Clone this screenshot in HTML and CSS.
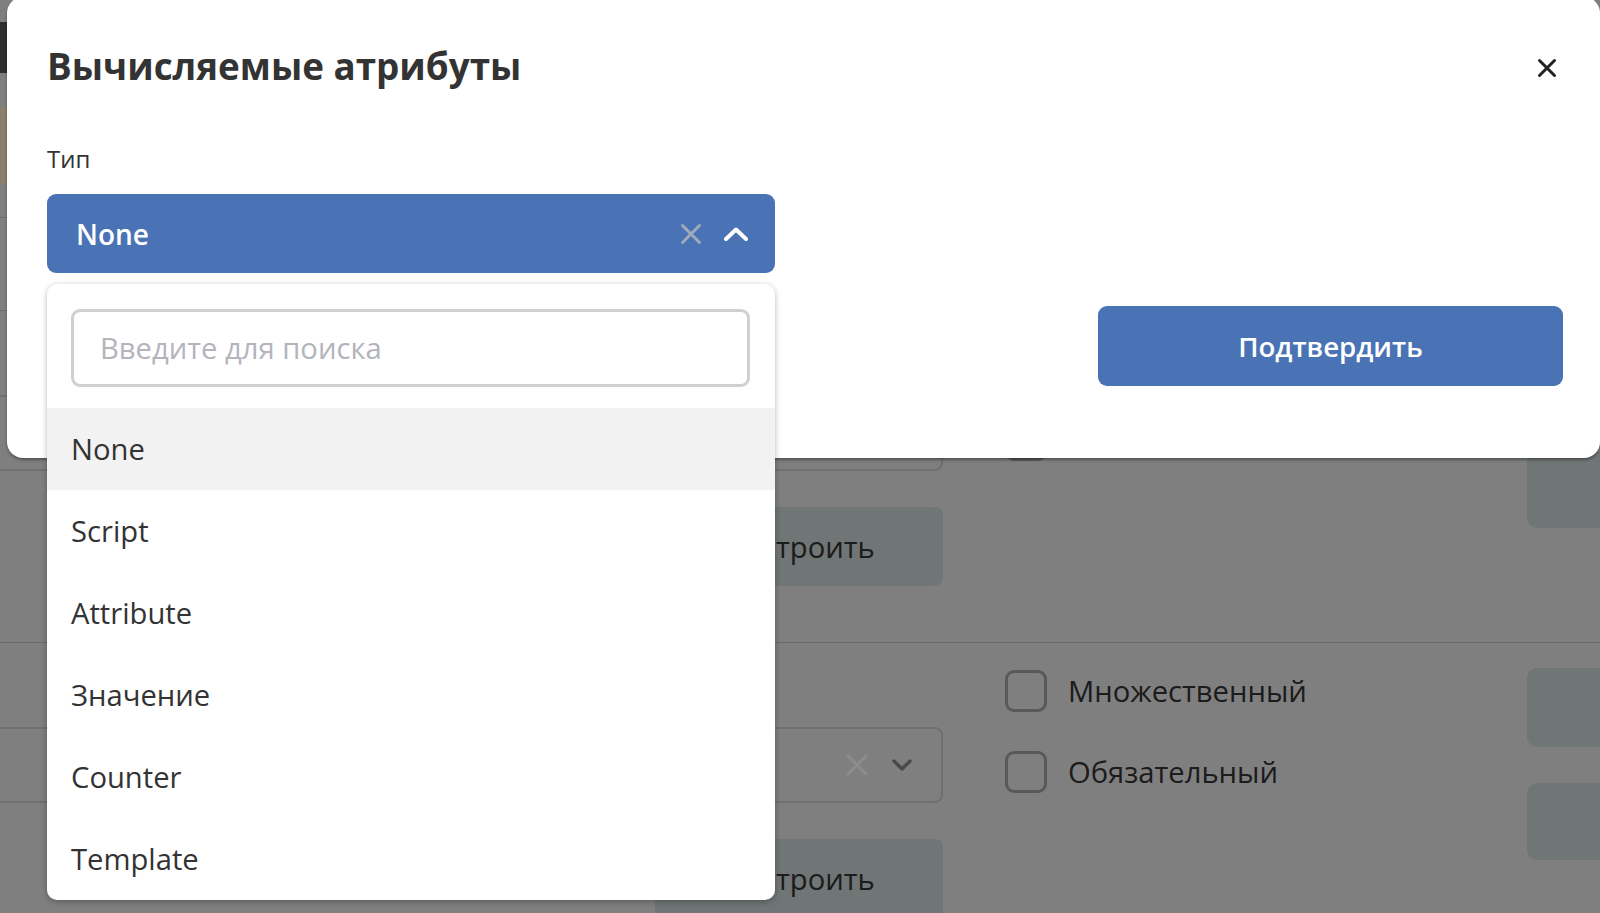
FILE: index.html
```html
<!DOCTYPE html>
<html lang="ru">
<head>
<meta charset="utf-8">
<title>Вычисляемые атрибуты</title>
<link rel="stylesheet" href="styles.css">
</head>
<body>
  <div class="page">
    <div class="page-top">
      <div class="toolbar"></div>
      <div class="preview"></div>
      <div class="top-rule"></div>
    </div>

    <section class="attr-row">
      <div class="attr-main">
        <div class="fake-select">
          <span class="fake-select__icons">
            <svg class="fx" width="24" height="24" viewBox="0 0 24 24"><path d="M3 3L21 21M21 3L3 21" stroke="#ffffff" stroke-width="3" stroke-linecap="round"/></svg>
            <svg class="fchev" width="22" height="14" viewBox="0 0 22 14"><path d="M3 3L11 11L19 3" stroke="#878787" stroke-width="3.5" fill="none" stroke-linecap="round" stroke-linejoin="round"/></svg>
          </span>
        </div>
        <button class="ghost-btn">Построить</button>
      </div>
      <div class="attr-flags">
        <span class="flag"><span class="box"></span></span>
        <span class="flag flag--second"><span class="box"></span></span>
      </div>
      <div class="attr-side">
        <span class="side-btn"></span>
        <span class="side-btn side-btn--second"></span>
      </div>
    </section>

    <section class="attr-row">
      <div class="attr-main">
        <div class="fake-select">
          <span class="fake-select__icons">
            <svg class="fx" width="24" height="24" viewBox="0 0 24 24"><path d="M3 3L21 21M21 3L3 21" stroke="#ffffff" stroke-width="3" stroke-linecap="round"/></svg>
            <svg class="fchev" width="22" height="14" viewBox="0 0 22 14"><path d="M3 3L11 11L19 3" stroke="#878787" stroke-width="3.5" fill="none" stroke-linecap="round" stroke-linejoin="round"/></svg>
          </span>
        </div>
        <button class="ghost-btn">Построить</button>
      </div>
      <div class="attr-flags">
        <label class="flag"><span class="box"></span>Множественный</label>
        <label class="flag flag--second"><span class="box"></span>Обязательный</label>
      </div>
      <div class="attr-side">
        <span class="side-btn"></span>
        <span class="side-btn side-btn--second"></span>
      </div>
    </section>
  </div>

  <div class="backdrop"></div>

  <div class="modal">
    <div class="modal-head">
      <h2 class="modal-title">Вычисляемые атрибуты</h2>
      <button class="modal-close" aria-label="Закрыть">
        <svg width="20" height="20" viewBox="0 0 20 20"><path d="M2.5 2.5L17.5 17.5M17.5 2.5L2.5 17.5" stroke="#222" stroke-width="3" stroke-linecap="round"/></svg>
      </button>
    </div>

    <div class="field">
      <div class="field-label">Тип</div>
      <div class="select-wrap">
        <div class="select">
          <span class="select-value">None</span>
          <span class="select-icons">
            <svg class="select-clear" width="24" height="24" viewBox="0 0 24 24"><path d="M3.5 3.5L20.5 20.5M20.5 3.5L3.5 20.5" stroke="#a1a9bb" stroke-width="3" stroke-linecap="round"/></svg>
            <svg class="select-chev" width="26" height="16" viewBox="0 0 26 16"><path d="M3 13L13 3.5L23 13" stroke="#ffffff" stroke-width="4" fill="none" stroke-linecap="round" stroke-linejoin="round"/></svg>
          </span>
        </div>

        <div class="dropdown">
          <div class="dropdown-search">
            <input class="search-input" type="text" placeholder="Введите для поиска">
          </div>
          <ul class="options">
            <li class="option option--active">None</li>
            <li class="option">Script</li>
            <li class="option">Attribute</li>
            <li class="option">Значение</li>
            <li class="option">Counter</li>
            <li class="option">Template</li>
          </ul>
        </div>
      </div>
    </div>

    <div class="modal-foot">
      <button class="primary-btn">Подтвердить</button>
    </div>
  </div>
</body>
</html>
```

FILE: styles.css
```css
* {
  box-sizing: border-box;
}

html, body {
  margin: 0;
  padding: 0;
}

body {
  width: 1600px;
  height: 913px;
  overflow: hidden;
  position: relative;
  font-family: "Open Sans", "Noto Sans", sans-serif;
  color: #333;
  background: #e8e8e8;
}

button {
  font-family: inherit;
  border: 0;
  padding: 0;
  background: none;
}

/* ---------- page behind the dialog ---------- */

.page {
  width: 1600px;
}

.page-top {
  height: 310px;
  padding-top: 22px;
}

.toolbar {
  height: 51px;
  width: 400px;
  background: #555;
}

.preview {
  margin-top: 34px;
  height: 78px;
  width: 300px;
  background: #fbe9c8;
}

.top-rule {
  margin-top: 32px;
  height: 1px;
  background: #c2c2c2;
}

.attr-row {
  height: 332px;
  border-top: 1px solid #c2c2c2;
  display: flex;
  margin-left: -20px;
}

.attr-main {
  flex: none;
  width: 963px;
  padding-top: 84px;
  display: flex;
  flex-direction: column;
  align-items: flex-end;
}

.fake-select {
  width: 100%;
  height: 76px;
  border: 2px solid #cacaca;
  border-radius: 8px;
  display: flex;
  align-items: center;
  justify-content: flex-end;
  padding-right: 28px;
}

.fake-select__icons {
  display: flex;
  align-items: center;
  gap: 22px;
}

.ghost-btn {
  margin-top: 36px;
  width: 288px;
  height: 79px;
  border-radius: 8px;
  background: #cdd5d5;
  font-size: 29.2px;
  color: #333;
}

.attr-flags {
  flex: none;
  margin-left: 62px;
  width: 522px;
  padding-top: 27px;
  display: flex;
  flex-direction: column;
}

.flag {
  display: flex;
  align-items: center;
  height: 42px;
  font-size: 29.2px;
  color: #333;
}

.flag--second {
  margin-top: 38px;
  height: 43px;
}

.box {
  width: 42px;
  height: 42px;
  border: 3px solid #a2a2a2;
  border-radius: 9px;
  margin-right: 21px;
  flex: none;
}

.attr-side {
  flex: none;
  width: 120px;
  padding-top: 25px;
  display: flex;
  flex-direction: column;
}

.side-btn {
  height: 79px;
  border-radius: 10px;
  background: #cdd5d5;
}

.side-btn--second {
  margin-top: 36px;
  height: 77px;
}

/* ---------- dialog ---------- */

.backdrop {
  position: absolute;
  inset: 0;
  background: rgba(0, 0, 0, 0.45);
}

.modal {
  position: absolute;
  left: 7px;
  right: 0;
  top: -3px;
  background: #fff;
  border-radius: 16px;
  box-shadow: 0 2px 3px rgba(0, 0, 0, 0.35);
  padding: 46px 37px 72px 40px;
}

.modal-head {
  height: 46px;
  display: flex;
  align-items: center;
  justify-content: space-between;
}

.modal-title {
  margin: 0;
  font-size: 36.8px;
  font-weight: 700;
  color: #333;
  line-height: 46px;
}

.modal-close {
  width: 20px;
  height: 20px;
  margin-right: 6px;
  margin-top: 3px;
  display: flex;
}

.field {
  margin-top: 53px;
  width: 728px;
}

.field-label {
  font-size: 24px;
  line-height: 34px;
  color: #333;
  margin-bottom: 18px;
}

.select-wrap {
  position: relative;
}

.select {
  height: 79px;
  border-radius: 9px;
  background: #4a73b5;
  display: flex;
  align-items: center;
  justify-content: space-between;
  padding: 0 26px 0 29px;
}

.select-value {
  color: #fff;
  font-size: 28px;
  font-weight: 600;
}

.select-icons {
  display: flex;
  align-items: center;
  gap: 20px;
}

.dropdown {
  position: absolute;
  top: 90px;
  left: 0;
  width: 100%;
  background: #fff;
  border-radius: 10px;
  box-shadow: 0 0 5px rgba(0, 0, 0, 0.12), 0 3px 6px rgba(0, 0, 0, 0.18);
  overflow: hidden;
  z-index: 2;
}

.dropdown-search {
  padding: 25px 25px 21px 24px;
}

.search-input {
  display: block;
  width: 100%;
  height: 78px;
  border: 3px solid #d0d0d0;
  border-radius: 9px;
  padding: 0 26px;
  font-family: inherit;
  font-size: 29.2px;
  color: #333;
  outline: none;
}

.search-input::placeholder {
  color: #b4b4bc;
}

.options {
  list-style: none;
  margin: 0;
  padding: 0;
}

.option {
  height: 82px;
  display: flex;
  align-items: center;
  padding-left: 24px;
  font-size: 29.2px;
  color: #333;
}

.option--active {
  background: #f2f2f2;
}

.modal-foot {
  margin-top: 33px;
  display: flex;
  justify-content: flex-end;
}

.primary-btn {
  width: 465px;
  height: 80px;
  border-radius: 9px;
  background: #4a73b5;
  color: #fff;
  font-size: 27.6px;
  font-weight: 600;
}
```
